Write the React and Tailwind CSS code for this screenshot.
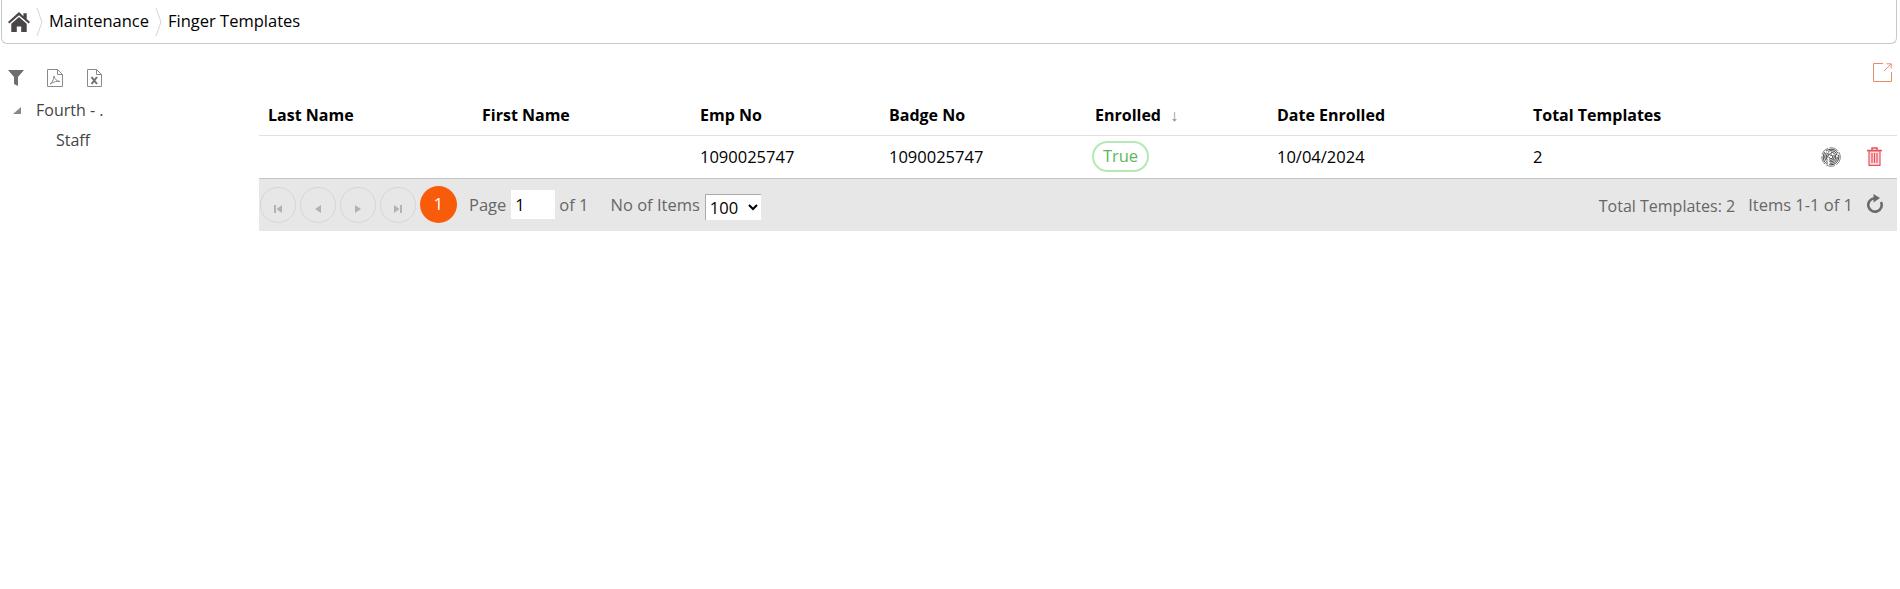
const font = { fontFamily: '"Open Sans", sans-serif' }

function Chevron() {
  return (
    <svg className="w-[7px] h-[30px] text-[#d5d5d5] mx-[6px]" viewBox="0 0 7 30" fill="none" stroke="currentColor" strokeWidth="1">
      <path d="M1 1l5 14-5 14" />
    </svg>
  )
}

function HomeIcon() {
  return (
    <svg className="w-[22px] h-[20px] -ml-[1px]" viewBox="0 0 20 18" fill="#4a4646">
      <path d="M10 0L0 9l1.2 1.4L10 2.8l8.8 7.6L20 9l-3-2.7V1h-3v2.7z" />
      <path d="M3 10.5L10 4.5l7 6V18h-5v-5H8v5H3z" />
    </svg>
  )
}

function FilterIcon() {
  return (
    <svg className="w-[16px] h-[16px]" viewBox="0 0 16 16" fill="#6e6e6e">
      <path d="M0 0h16l-6 7v9l-4-2V7z" />
    </svg>
  )
}

function PdfIcon() {
  return (
    <svg className="w-[16px] h-[18px]" viewBox="0 0 16 18" fill="none" stroke="#8a8a8a" strokeWidth="1">
      <path d="M.5.5h10l5 5v12H.5zM10.5.5v5h5" />
      <path d="M3 15c2-1 3.5-4 4-8 .5 3 2.5 5 6 5.500-3-.5-6 0-10 2.500z" />
    </svg>
  )
}

function ExcelIcon() {
  return (
    <svg className="w-[15px] h-[18px]" viewBox="0 0 15 18" fill="none" stroke="#8a8a8a" strokeWidth="1">
      <path d="M.5.5h9l5 5v12H.5zM9.500.5v5h5" />
      <path d="M4.500 8l5.500 7M10 8l-5.500 7" strokeWidth="2" stroke="#6e6e6e" />
    </svg>
  )
}

function FingerprintIcon() {
  return (
    <svg className="w-[20px] h-[20px]" viewBox="0 0 20 20" fill="none" stroke="#2e2e2e" strokeWidth="0.900">
      <circle cx="10" cy="10" r="9.300" strokeDasharray="9 1.500" stroke="#777" />
      <circle cx="10" cy="10" r="7.800" strokeDasharray="14 1.500" />
      <circle cx="10" cy="10" r="6.300" strokeDasharray="11 2" />
      <circle cx="10" cy="10" r="4.800" strokeDasharray="9 2" />
      <circle cx="10" cy="10" r="3.300" strokeDasharray="7 2" />
      <circle cx="10" cy="10" r="1.800" strokeDasharray="5 1.500" />
    </svg>
  )
}

function TrashIcon() {
  return (
    <svg className="w-[15px] h-[19px]" viewBox="0 0 15 19" fill="none" stroke="#e8505b" strokeWidth="1.200">
      <path d="M0 3.500h15M5 3V1h5v2" strokeWidth="1.500" />
      <path d="M2 4h11v14.400H2z" fill="#fbdcde" />
      <path d="M5 6v10M7.500 6v10M10 6v10" />
    </svg>
  )
}

function RefreshIcon() {
  return (
    <svg className="w-[18px] h-[19px]" viewBox="0 0 18 19" fill="none" stroke="#6b6b6b" strokeWidth="2.600">
      <path d="M15 8A6.700 6.700 0 1 1 8 4.300" />
      <path d="M7.500 0L14 4l-6.500 4.500z" fill="#6b6b6b" stroke="none" />
    </svg>
  )
}

function PagerButton({ d }) {
  return (
    <button className="w-[36px] h-[36px] mr-[4px] rounded-full border border-[#d6d4d4] flex items-center justify-center">
      <svg className="w-[10px] h-[10px] mt-[8px]" viewBox="0 0 10 10" fill="#b3b1b1">
        <path d={d} />
      </svg>
    </button>
  )
}

export default function App() {
  return (
    <div className="w-[1900px] h-[589px] bg-white overflow-hidden text-[16.500px] text-black" style={font}>
      {/* Breadcrumb */}
      <div className="h-[44px] ml-[1px] mr-[3px] border border-t-0 border-[#c9c9c9] rounded-b-[6px] flex items-center pl-[7px]">
        <HomeIcon />
        <Chevron />
        <span>Maintenance</span>
        <Chevron />
        <span>Finger Templates</span>
      </div>

      <div className="flex">
        {/* Tree */}
        <div className="w-[259px] shrink-0 pt-[25px] text-[#444] text-[16px]">
          <div className="flex items-center pl-[8px]">
            <FilterIcon />
            <div className="ml-[23px]"><PdfIcon /></div>
            <div className="ml-[24px]"><ExcelIcon /></div>
          </div>
          <div className="flex items-center mt-[13px] pl-[13px] h-[20px]">
            <span className="w-0 h-0 border-l-[8px] border-l-transparent border-b-[7px] border-b-[#888] mr-[15px]" />
            <span>Fourth - .</span>
          </div>
          <div className="pl-[56px] mt-[8px]">Staff</div>
        </div>

        {/* Grid */}
        <div className="flex-1 mr-[3px]">
          <div className="flex justify-end pt-[19px] pr-[5px] h-[50px]">
            <svg className="w-[19px] h-[19px]" viewBox="0 0 19 19" fill="none" stroke="#e88d6c" strokeWidth="1">
              <path d="M10 .5H.5v18h18V9" />
              <path d="M11 8l7-7M13.500.8h4.700v4.700" />
            </svg>
          </div>
          <table className="w-full table-fixed border-collapse">
            <colgroup>
              <col className="w-[214px]" />
              <col className="w-[218px]" />
              <col className="w-[189px]" />
              <col className="w-[207px]" />
              <col className="w-[182px]" />
              <col className="w-[255px]" />
              <col />
              <col className="w-[100px]" />
            </colgroup>
            <thead>
              <tr className="h-[41px] border-b border-[#e0e0e0] text-left font-bold text-[16px]">
                <th className="pl-[9px] pt-[2px]">Last Name</th>
                <th className="pl-[9px] pt-[2px]">First Name</th>
                <th className="pl-[9px] pt-[2px]">Emp No</th>
                <th className="pl-[9px] pt-[2px]">Badge No</th>
                <th className="pl-[8px] pt-[2px]">
                  Enrolled <span className="ml-[5px] text-[#888] font-normal">↓</span>
                </th>
                <th className="pl-[8px] pt-[2px]">Date Enrolled</th>
                <th className="pl-[9px] pt-[2px]">Total Templates</th>
                <th />
              </tr>
            </thead>
            <tbody>
              <tr className="h-[43px] border-b border-[#c4c4c4]">
                <td />
                <td />
                <td className="pl-[9px] pt-[1px]">1090025747</td>
                <td className="pl-[9px] pt-[1px]">1090025747</td>
                <td className="pl-[5px]">
                  <span className="inline-flex items-center justify-center w-[57px] h-[31px] rounded-full border-2 border-[#b5e8b5] text-[#5cb85c]">True</span>
                </td>
                <td className="pl-[8px] pt-[1px]">10/04/2024</td>
                <td className="pl-[9px] pt-[1px]">2</td>
                <td>
                  <div className="flex items-center gap-[26px] justify-end pr-[15px]">
                    <FingerprintIcon />
                    <TrashIcon />
                  </div>
                </td>
              </tr>
            </tbody>
          </table>

          {/* Pager */}
          <div className="h-[52px] bg-[#e8e7e8] flex items-center pl-[1px] text-[#666]">
            <PagerButton d="M1 1h2v8H1zM9 1v8L3.500 5z" />
            <PagerButton d="M8 1v8L2 5z" />
            <PagerButton d="M2 1v8l6-4z" />
            <PagerButton d="M9 1H7v8h2zM1 1v8l5.500-4z" />
            <span className="w-[37px] h-[37px] rounded-full bg-[#f85c0a] text-white flex items-center justify-center">1</span>
            <span className="ml-[12px] pt-[2px]">Page</span>
            <input className="w-[44px] h-[29px] ml-[5px] pl-[4px] bg-white text-black outline-none" defaultValue="1" readOnly />
            <span className="ml-[4px] pt-[2px]">of 1</span>
            <span className="ml-[22px] pt-[2px]">No of Items</span>
            <select className="w-[56px] h-[26px] ml-[5px] mt-[4px] bg-white text-black border-l border-t border-[#aaa]" defaultValue="100">
              <option>100</option>
            </select>
            <span className="ml-auto text-[16px] pt-[2px]">Total Templates: 2</span>
            <span className="ml-[13px] pt-[2px]">Items 1-1 of 1</span>
            <div className="ml-[13px] mr-[13px] mb-[3px]"><RefreshIcon /></div>
          </div>
        </div>
      </div>
    </div>
  )
}
